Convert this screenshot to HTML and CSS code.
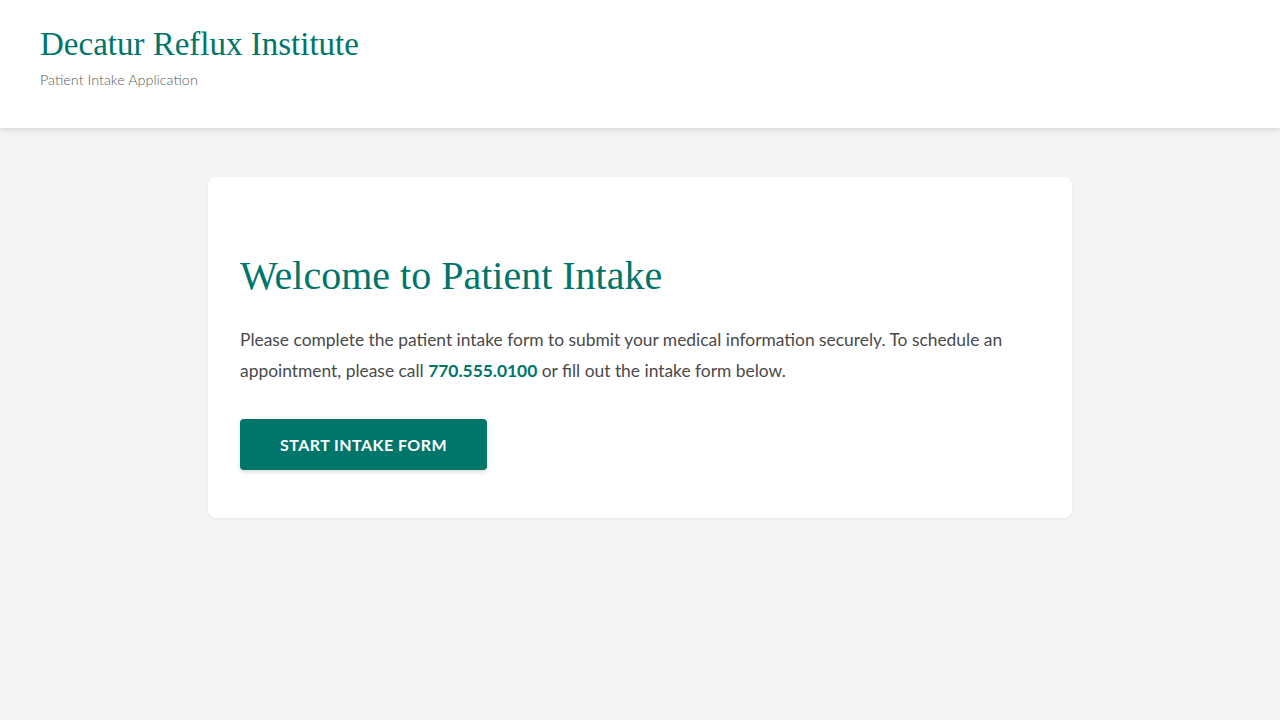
FILE: index.html
```html
<!DOCTYPE html>
<html>
	<head>
		<title>Decatur Reflux Institute - Patient Intake</title>
		<link rel="stylesheet" href="styles.css">
	</head>

	<body>
		<header class="siteHeader">
			<div class="brand">Decatur Reflux Institute</div>
			<div class="tagline">Patient Intake Application</div>
		</header>

		<main class="page">
			<section class="welcomeCard">
				<h1 class="welcomeTitle">Welcome to Patient Intake</h1>
				<p class="welcomeText">
					Please complete the patient intake form to submit your medical information securely. To schedule an
					appointment, please call <strong class="phone">770.555.0100</strong> or fill out the intake form below.
				</p>
				<button class="startButton" type="button">Start Intake Form</button>
			</section>
		</main>
	</body>
</html>
```

FILE: styles.css
```css
body
{
	margin: 0;
	background-color: #f4f4f4;
	font-family: Lato, "Open Sans", sans-serif;
	color: #4a4a4a;
}

.siteHeader
{
	background-color: #ffffff;
	height: 128px;
	box-sizing: border-box;
	padding: 25px 40px 0 40px;
	box-shadow: 0 2px 6px rgba(0, 0, 0, 0.12);
}

.brand
{
	font-family: "Liberation Serif", "DejaVu Serif", serif;
	font-size: 33px;
	line-height: 38px;
	color: #00756a;
}

.tagline
{
	margin-top: 8px;
	font-size: 14.4px;
	font-weight: 300;
	color: #5a5a5a;
}

.page
{
	padding: 49px 0;
}

.welcomeCard
{
	width: 864px;
	box-sizing: border-box;
	margin: 0 auto;
	padding: 75px 32px 48px 32px;
	background-color: #ffffff;
	border-radius: 8px;
	box-shadow: 0 1px 3px rgba(0, 0, 0, 0.06);
}

.welcomeTitle
{
	margin: 0 0 24px 0;
	font-family: "Liberation Serif", "DejaVu Serif", serif;
	font-weight: normal;
	font-size: 40px;
	line-height: 48px;
	color: #00756a;
}

.welcomeText
{
	margin: 0 0 33px 0;
	font-size: 17.4px;
	line-height: 31px;
}

.phone
{
	color: #00756a;
	font-weight: bold;
}

.startButton
{
	height: 51px;
	padding: 0 40px;
	border: 0;
	border-radius: 4px;
	background-color: #00756a;
	color: #ffffff;
	font-family: Lato, sans-serif;
	font-weight: bold;
	font-size: 16px;
	letter-spacing: 0.45px;
	text-transform: uppercase;
	cursor: pointer;
	box-shadow: 0 2px 4px rgba(0, 0, 0, 0.15);
}
```
